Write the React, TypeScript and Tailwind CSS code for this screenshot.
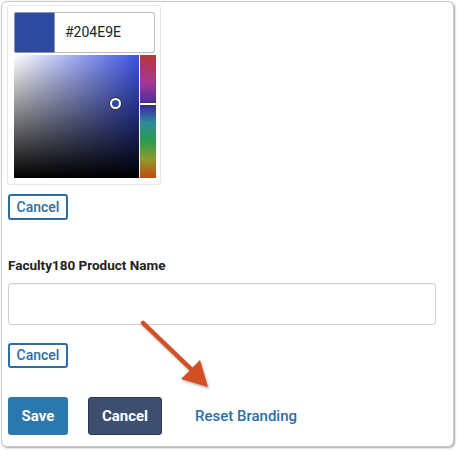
import React from "react";

export default function App() {
  return (
    <div className="w-[457px] h-[450px] bg-white relative font-['Roboto',sans-serif] text-[#333]">
      {/* Frame */}
      <div className="absolute left-[1px] top-[1px] w-[453px] h-[446px] border border-[#c8c8c8] rounded-[6px] shadow-[1px_1px_2px_rgba(0,0,0,0.35)] bg-white" />

      <div className="relative pl-[8px] pt-[5px] flex flex-col items-start">
        {/* Color picker */}
        <div className="-ml-[1px] w-[154px] h-[180px] border border-[#e6e6e6] rounded-[3px] pl-[6px] pr-[4px] py-[6px] flex flex-col gap-[2px]">
          <div className="flex h-[41px] mr-[1px]">
            <div className="w-[41px] bg-[#2c4b9e] rounded-l-[2px] border border-[#8a96b8]" />
            <div className="flex-1 border border-[#b7bcc7] border-l-0 rounded-r-[3px] flex items-center pl-[10px] text-[14px] text-[#222]">
              #204E9E
            </div>
          </div>
          <div className="flex h-[124px] gap-[1px]">
            <div className="relative w-[125px] bg-[linear-gradient(to_top,#000,transparent),linear-gradient(to_right,#fff,#3b52e4)]">
              <div className="absolute left-[96px] top-[43px] w-[11px] h-[11px] rounded-full border-[2px] border-white bg-[#2f4a9f] ring-1 ring-[#333]" />
            </div>
            <div className="relative w-[16px] bg-[linear-gradient(to_bottom,#b33838_0%,#a8378f_22%,#3b2d9c_42%,#2b8c9a_55%,#2a9b4a_70%,#8f9a2e_85%,#c4460f_100%)]">
              <div className="absolute left-0 right-0 top-[47px] h-[4px] bg-white border-y border-[#333]" />
            </div>
          </div>
        </div>

        <button className="mt-[9px] w-[60px] h-[26px] border-[2px] border-[#2b6ea6] rounded-[3px] text-[14px] font-medium text-[#2b6ea6]">
          Cancel
        </button>

        <label className="mt-[36px] text-[13.5px] font-bold text-[#222] leading-[18px]">Faculty180 Product Name</label>

        <div className="mt-[9px] w-[428px] h-[42px] border border-[#d0d0d0] rounded-[3px] shadow-[inset_0_1px_1px_rgba(0,0,0,0.06)]" />

        <button className="mt-[18px] w-[60px] h-[25px] border-[2px] border-[#2b6ea6] rounded-[3px] text-[14px] font-medium text-[#2b6ea6]">
          Cancel
        </button>

        <div className="mt-[29px] flex items-center">
          <button className="w-[60px] h-[38px] bg-[#2b78af] rounded-[3px] text-[15px] font-bold text-white">Save</button>
          <button className="ml-[20px] w-[74px] h-[38px] bg-[#3e4e6e] rounded-[3px] text-[15px] font-bold text-white border border-[#2e3a52]">
            Cancel
          </button>
          <span className="ml-[33px] text-[15px] font-medium text-[#2b6ea6]">Reset Branding</span>
        </div>
      </div>

      {/* Annotation arrow */}
      <svg className="absolute left-[130px] top-[310px]" width="100" height="90" viewBox="0 0 100 90">
        <defs>
          <filter id="sh" x="-20%" y="-20%" width="140%" height="140%">
            <feDropShadow dx="1" dy="1.5" stdDeviation="1.2" floodColor="#000" floodOpacity="0.35" />
          </filter>
        </defs>
        <g filter="url(#sh)">
          <line x1="13" y1="13" x2="62" y2="60" stroke="#d24f27" strokeWidth="4.5" strokeLinecap="round" />
          <polygon points="78,77 51,69 70,50" fill="#d24f27" />
        </g>
      </svg>
    </div>
  );
}
